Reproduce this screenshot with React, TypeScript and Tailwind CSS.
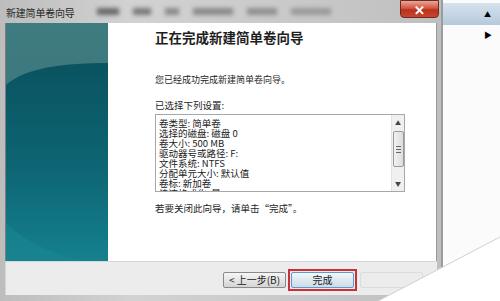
import React from "react";

const F = { fontFamily: '"Noto Sans CJK SC", "Noto Sans", sans-serif' };

function TealArt() {
  return (
    <svg width="103" height="238" viewBox="0 0 103 238" className="block">
      <defs>
        <linearGradient id="tg" x1="0" y1="0" x2="0" y2="1">
          <stop offset="0" stopColor="#0a5361" />
          <stop offset="0.5" stopColor="#0d6472" />
          <stop offset="1" stopColor="#15808e" />
        </linearGradient>
        <linearGradient id="top" x1="0" y1="0" x2="0" y2="1">
          <stop offset="0" stopColor="#3f7c80" />
          <stop offset="1" stopColor="#346e76" />
        </linearGradient>
      </defs>
      <rect width="103" height="238" fill="url(#top)" />
      <path d="M0 62 C 20 44, 60 40, 103 40 L103 238 L0 238 Z" fill="url(#tg)" />
      <path d="M0 200 C 20 220, 50 232, 80 238 L0 238 Z" fill="#1b8794" opacity="0.5" />
    </svg>
  );
}

function Btn({ children, def }: { children: React.ReactNode; def?: boolean }) {
  return (
    <div
      className={
        "w-[63px] h-[16px] rounded-[2px] border flex items-center justify-center text-[10px] leading-none text-[#222] " +
        (def
          ? "border-[#5b9ccc] bg-[linear-gradient(#f4f8fb,#dde8f0_50%,#cfdde8)]"
          : "border-[#8a8a8a] bg-[linear-gradient(#f6f6f6,#e6e6e6_50%,#d4d4d4)]")
      }
    >
      {children}
    </div>
  );
}

export default function App() {
  const lines = [
    "卷类型: 简单卷",
    "选择的磁盘: 磁盘 0",
    "卷大小: 500 MB",
    "驱动器号或路径: F:",
    "文件系统: NTFS",
    "分配单元大小: 默认值",
    "卷标: 新加卷",
    "快速格式化: 是",
  ];
  return (
    <div className="relative w-[500px] h-[301px] overflow-hidden bg-[#fbfbfb] flex" style={F}>
      {/* window */}
      <div className="w-[441px] h-full flex flex-col bg-[linear-gradient(90deg,#bdbdbd,#d2d2d2_30%,#c8c8c8_70%,#bfbfbf)]">
        {/* title bar */}
        <div className="h-[23px] flex items-start relative">
          <div className="pl-[6px] pt-[7px] text-[10px] leading-[11px] text-[#2a2a2a] tracking-[-0.2px]">新建简单卷向导</div>
          <div className="flex gap-[14px] pt-[8px] pl-[22px] blur-[2px]">
            <div className="w-[22px] h-[7px] bg-[#6a6a6a]" />
            <div className="w-[18px] h-[7px] bg-[#7a7a7a]" />
            <div className="w-[14px] h-[7px] bg-[#8a8a8a]" />
            <div className="w-[40px] h-[7px] bg-[#8a8a8a]" />
            <div className="w-[30px] h-[7px] bg-[#909090]" />
            <div className="w-[40px] h-[7px] bg-[#9a9a9a]" />
          </div>
          <div className="ml-auto mr-[2px] w-[39px] h-[18px] rounded-b-[4px] border border-[#6e2a20] bg-[linear-gradient(#e8a79a,#d4553f_45%,#b8321f_55%,#c9452e)] flex items-center justify-center text-white text-[13px] font-bold leading-none">
            ✕
          </div>
        </div>
        {/* body */}
        <div className="flex-1 flex flex-col pl-[5px] pr-[4px] pb-[6px]">
          <div className="flex h-[238px] border-l border-[#7d7d7d]">
            <div className="w-[102px] h-full overflow-hidden">
              <TealArt />
            </div>
            <div className="flex-1 bg-white pl-[47px] text-[#1e1e1e] border-r border-[#9a9a9a]">
              <div className="mt-[7px] text-[13.5px] leading-[14px] font-bold">正在完成新建简单卷向导</div>
              <div className="mt-[30px] text-[9px] leading-[12px]">您已经成功完成新建简单卷向导。</div>
              <div className="mt-[13px] text-[9.5px] leading-[12px]">已选择下列设置:</div>
              <div className="mt-[3px] w-[250px] h-[78px] border border-[#a5a7ad] flex overflow-hidden">
                <div className="flex-1 pl-[3px] pt-[3px] text-[9.5px] leading-[10px] text-[#222] overflow-hidden">
                  {lines.map((l) => (
                    <div key={l} className="whitespace-pre h-[10px]">{l}</div>
                  ))}
                </div>
                <div className="w-[13px] h-full bg-[#f0f0f0] border-l border-[#e2e2e2] flex flex-col items-center">
                  <div className="h-[16px] flex items-center text-[6px] text-[#444] leading-none">▲</div>
                  <div className="w-[11px] h-[36px] rounded-[2px] border border-[#9a9a9a] bg-[linear-gradient(90deg,#f2f2f2,#dcdcdc)] flex flex-col items-center justify-center gap-[2px]">
                    <div className="w-[5px] h-px bg-[#666]" />
                    <div className="w-[5px] h-px bg-[#666]" />
                    <div className="w-[5px] h-px bg-[#666]" />
                  </div>
                  <div className="mt-auto h-[14px] flex items-center text-[6px] text-[#444] leading-none">▼</div>
                </div>
              </div>
              <div className="mt-[10px] text-[9.5px] leading-[12px]">若要关闭此向导，请单击“完成”。</div>
            </div>
          </div>
          <div className="flex-1 bg-[#ececec] border-t border-[#d6d6d6] border-l border-[#7d7d7d] flex items-start pt-[10px] pl-[217px]">
            <Btn>&lt; 上一步(B)</Btn>
            <div className="ml-[2px] -mt-[3px] p-[2px] border-2 border-[#c9303a]">
              <div className="-m-[1px]">
                <Btn def>完成</Btn>
              </div>
            </div>
            <div className="ml-[3px] w-[63px] h-[16px] border border-[#dcdcdc] rounded-[2px]" />
          </div>
        </div>
      </div>
      {/* right side */}
      <div className="flex-1 flex flex-col border-l-2 border-[#9c9c9c]">
        <div className="mt-[3px] h-[22px] bg-[linear-gradient(#d6e2ee,#b5c9dc)] flex items-center justify-end pr-[9px] text-[7px] text-black">▲</div>
        <div className="h-[20px] flex items-center justify-end pr-[8px] text-[8px] text-black">▶</div>
      </div>
      {/* page curl */}
      <svg className="absolute inset-0 pointer-events-none" width="500" height="301" viewBox="0 0 500 301">
        <polygon points="378,301 500,237 500,301" fill="#ffffff" />
        <line x1="378" y1="301" x2="500" y2="237" stroke="#d0d0d0" strokeWidth="1" />
      </svg>
    </div>
  );
}
